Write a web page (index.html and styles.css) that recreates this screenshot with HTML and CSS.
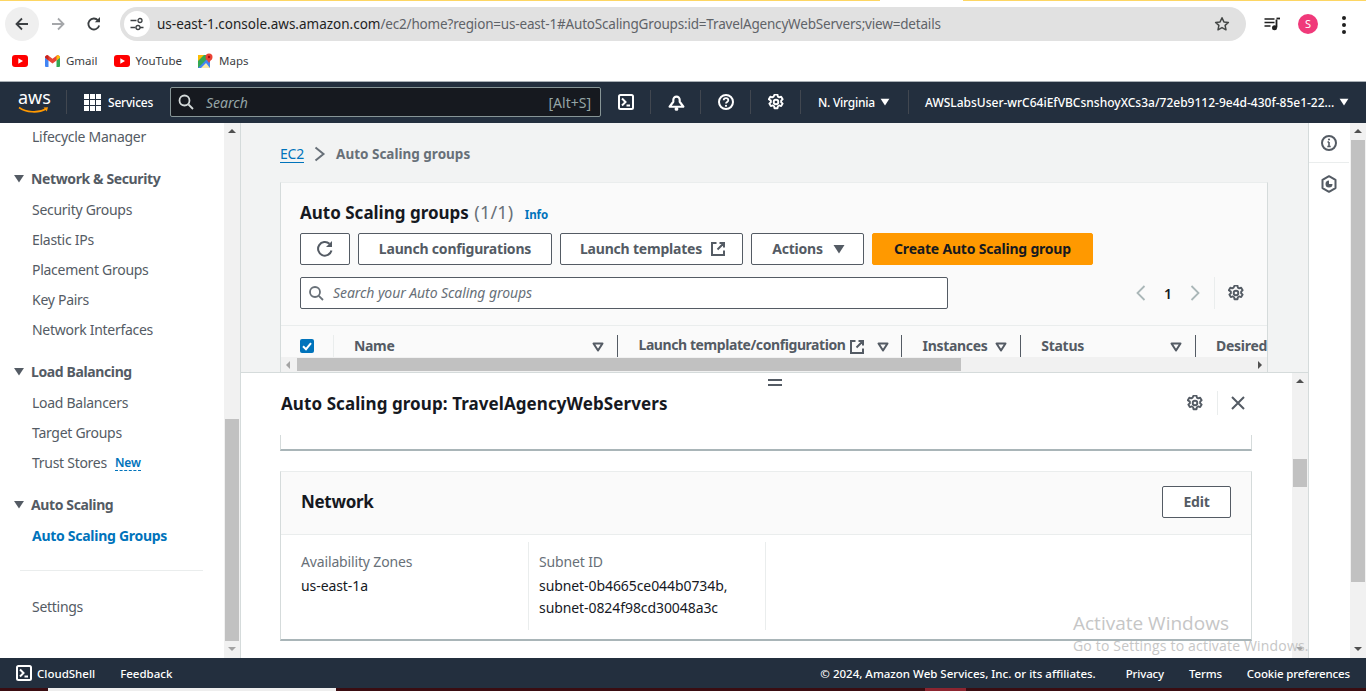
FILE: index.html
```html
<!DOCTYPE html>
<html lang="en">
<head>
    <meta charset="UTF-8" />
    <meta name="viewport" content="width=device-width, initial-scale=1" />
    <title>Auto Scaling groups | EC2</title>
    <link rel="stylesheet" href="styles.css">
</head>
<body>
    <svg class="defs" width="0" height="0">
        <symbol id="gear" viewBox="0.4 0.4 15.2 15.2">
            <path d="M6.600 1h2.800l.4 1.900 1.300.7 1.800-.6 1.400 2.400-1.400 1.300v1.500l1.400 1.300-1.400 2.400-1.800-.6-1.300.7-.4 1.900H6.600l-.4-1.900-1.300-.7-1.800.6-1.400-2.400 1.400-1.300V6.700L1.200 5.400l1.400-2.400 1.800.6 1.300-.7z" fill="none" stroke="currentColor" stroke-width="1.800" stroke-linejoin="round"/>
            <circle cx="8" cy="8" r="2.200" fill="none" stroke="currentColor" stroke-width="1.800"/>
        </symbol>
        <symbol id="sort" viewBox="0 0 12 10">
            <path d="M1.500 1.500h9L6 8.500z" fill="none" stroke="currentColor" stroke-width="2" stroke-linejoin="round"/>
        </symbol>
        <symbol id="caret" viewBox="0 0 12 10">
            <path d="M0.500 1h11L6 9.500z" fill="currentColor"/>
        </symbol>
        <symbol id="ext" viewBox="0 0 16 16">
            <path d="M6.500 2H2v12h12V9.500M9.500 2H14v4.500M14 2L7.500 8.500" fill="none" stroke="currentColor" stroke-width="2"/>
        </symbol>
        <symbol id="shell" viewBox="0 0 16 16">
            <rect x="1" y="1" width="14" height="14" rx="1.500" fill="none" stroke="currentColor" stroke-width="2"/>
            <path d="M4 4.500L7.500 8 4 11.500M8.500 11.500H12" fill="none" stroke="currentColor" stroke-width="2"/>
        </symbol>
        <symbol id="yt" viewBox="0 0 16 12">
            <rect width="16" height="12" rx="3" fill="#f00"/>
            <path d="M6.300 3.300L11 6l-4.700 2.700z" fill="#fff"/>
        </symbol>
    </svg>

    <div class="chrome">
        <div class="toolbar">
            <div class="accent"><span class="accent-left"></span><span class="accent-right"></span></div>
            <div class="back-btn">
                <svg width="16" height="16" viewBox="0 0 16 16"><path d="M14 8H3M8 2.500L2.500 8 8 13.500" fill="none" stroke="#3c4043" stroke-width="1.800"/></svg>
            </div>
            <div class="tool-btn forward">
                <svg width="16" height="16" viewBox="0 0 16 16"><path d="M2 8h11M8 2.500L13.500 8 8 13.500" fill="none" stroke="#a5a7aa" stroke-width="1.800"/></svg>
            </div>
            <div class="tool-btn reload">
                <svg width="16" height="16" viewBox="0 0 16 16"><path d="M13.200 9.500A5.500 5.500 0 1 1 12 4.300" fill="none" stroke="#3c4043" stroke-width="1.800"/><path d="M14 1v5.200H8.800z" fill="#3c4043"/></svg>
            </div>
            <div class="omnibox">
                <div class="site-info">
                    <svg width="14" height="14" viewBox="0 0 14 14"><path d="M0.500 3.500h6M10 10.500h3.500M0.500 10.500h5" stroke="#3c4043" stroke-width="1.300" fill="none"/><circle cx="10" cy="3.500" r="2" fill="none" stroke="#3c4043" stroke-width="1.300"/><circle cx="8" cy="10.500" r="2" fill="none" stroke="#3c4043" stroke-width="1.300"/></svg>
                </div>
                <span class="url"><span class="url-host">us-east-1.console.aws.amazon.com</span>/ec2/home?region=us-east-1#AutoScalingGroups:id=TravelAgencyWebServers;view=details</span>
                <svg class="star" width="16" height="16" viewBox="0 0 16 16"><path d="M8 1.800l1.900 4.100 4.500.5-3.300 3 .9 4.400L8 11.600l-4 2.200.9-4.400-3.300-3 4.500-.5z" fill="none" stroke="#444746" stroke-width="1.500" stroke-linejoin="round"/></svg>
            </div>
            <svg class="media" width="16" height="14" viewBox="0 0 16 14"><path d="M0.500 2h10M0.500 5.500h10M0.500 9h6" stroke="#1f1f1f" stroke-width="1.500" fill="none"/><path d="M12.500 2.500v8" stroke="#1f1f1f" stroke-width="1.800"/><path d="M12.500 1.500H16" stroke="#1f1f1f" stroke-width="1.800"/><circle cx="10.500" cy="10.800" r="2.500" fill="#1f1f1f"/></svg>
            <div class="avatar">S</div>
            <div class="dots"><i></i><i></i><i></i></div>
        </div>
        <div class="bookmarks">
            <svg class="bm-first" width="16" height="12"><use href="#yt"/></svg>
            <a class="bm bm-gmail">
                <svg width="15" height="12" viewBox="0 0 15 12"><path d="M0 2.500V11a1 1 0 0 0 1 1h2.500V5.500z" fill="#4285f4"/><path d="M15 2.500V11a1 1 0 0 1-1 1h-2.500V5.500z" fill="#34a853"/><path d="M0 2.500C0 .8 1.800-.5 3.200.6L7.500 3.800l4.300-3.200C13.200-.5 15 .8 15 2.500l-3.500 3L7.500 8.500l-4-3z" fill="#ea4335"/><path d="M11.500 1.400l.3-.8C13.200-.5 15 .8 15 2.500l-3.500 3z" fill="#fbbc04"/><path d="M3.500 1.400L3.200.6C1.800-.5 0 .8 0 2.500l3.500 3z" fill="#c5221f"/></svg>
                <span>Gmail</span>
            </a>
            <a class="bm bm-yt">
                <svg width="16" height="12"><use href="#yt"/></svg>
                <span>YouTube</span>
            </a>
            <a class="bm bm-maps">
                <svg width="15" height="15" viewBox="0 0 15 15"><rect y="2" width="12" height="13" fill="#34a853"/><path d="M0 15L12 3v12z" fill="#4285f4"/><path d="M0 2h6L0 8z" fill="#fbbc04"/><path d="M3 15l5-5 4 5z" fill="#fbe9a7"/><circle cx="11" cy="4" r="3.500" fill="#ea4335"/><path d="M8.500 6L11 10l2.500-4z" fill="#ea4335"/><circle cx="11" cy="4" r="1.200" fill="#a50e0e"/></svg>
                <span>Maps</span>
            </a>
        </div>
    </div>

    <header class="aws-nav">
        <div class="aws-logo">
            <span class="aws-word">aws</span>
            <svg width="31" height="8" viewBox="0 0 31 8"><path d="M1 1.500C8 6.500 20 7.500 28 3" fill="none" stroke="#f90" stroke-width="1.600"/><path d="M25.500 1.500L30 1.200 28.800 5.500z" fill="#f90"/></svg>
        </div>
        <a class="services">
            <span class="grid-icon"><i></i><i></i><i></i><i></i><i></i><i></i><i></i><i></i><i></i></span>
            Services
        </a>
        <div class="nav-search">
            <svg width="16" height="16" viewBox="0 0 16 16"><circle cx="6.500" cy="6.500" r="5" fill="none" stroke="#d5dbdb" stroke-width="1.800"/><path d="M10.500 10.500L15 15" stroke="#d5dbdb" stroke-width="1.800"/></svg>
            <span class="nav-search-text">Search</span>
            <span class="nav-search-key">[Alt+S]</span>
        </div>
        <a class="nav-icon"><svg width="16" height="16"><use href="#shell"/></svg></a>
        <a class="nav-icon">
            <svg width="17" height="17" viewBox="0 0 16 16"><path d="M1.500 12L5 7.300V5.500a3 3 0 0 1 6 0v1.800l3.500 4.700z" fill="none" stroke="currentColor" stroke-width="2" stroke-linejoin="round"/><circle cx="8" cy="14" r="1.800" fill="currentColor"/></svg>
        </a>
        <a class="nav-icon">
            <svg width="16" height="16" viewBox="0 0 16 16"><circle cx="8" cy="8" r="7" fill="none" stroke="currentColor" stroke-width="2"/><path d="M5.700 6.300c0-3 4.600-3 4.600 0 0 1.700-2.300 1.700-2.300 3.300" fill="none" stroke="currentColor" stroke-width="1.800"/><circle cx="8" cy="11.800" r="1.100" fill="currentColor"/></svg>
        </a>
        <a class="nav-icon"><svg width="16" height="16"><use href="#gear"/></svg></a>
        <a class="nav-region">N. Virginia <svg width="10" height="8"><use href="#caret"/></svg></a>
        <a class="nav-account">AWSLabsUser-wrC64iEfVBCsnshoyXCs3a/72eb9112-9e4d-430f-85e1-22... <svg width="10" height="8"><use href="#caret"/></svg></a>
    </header>

    <div class="main">
        <aside class="sidebar">
            <nav class="side-nav">
                <a class="side-item">Lifecycle Manager</a>
                <div class="side-head"><svg width="12" height="9"><use href="#caret"/></svg>Network &amp; Security</div>
                <a class="side-item">Security Groups</a>
                <a class="side-item">Elastic IPs</a>
                <a class="side-item">Placement Groups</a>
                <a class="side-item">Key Pairs</a>
                <a class="side-item">Network Interfaces</a>
                <div class="side-head"><svg width="12" height="9"><use href="#caret"/></svg>Load Balancing</div>
                <a class="side-item">Load Balancers</a>
                <a class="side-item">Target Groups</a>
                <a class="side-item">Trust Stores <span class="new-tag">New</span></a>
                <div class="side-head"><svg width="12" height="9"><use href="#caret"/></svg>Auto Scaling</div>
                <a class="side-item active">Auto Scaling Groups</a>
                <hr class="side-rule">
                <a class="side-item">Settings</a>
            </nav>
            <div class="vbar side-bar">
                <span class="arrow-up"></span>
                <div class="vtrack"><div class="vthumb"></div></div>
                <span class="arrow-down"></span>
            </div>
        </aside>

        <div class="content">
            <section class="upper">
                <div class="crumbs">
                    <a class="crumb-link">EC2</a>
                    <svg width="12" height="16" viewBox="0 0 12 16"><path d="M1.500 1.500L9.500 8l-8 6.500" fill="none" stroke="#687078" stroke-width="2"/></svg>
                    <span class="crumb-current">Auto Scaling groups</span>
                </div>
                <div class="group-card">
                    <div class="group-head">
                        <h1 class="group-title">Auto Scaling groups <span class="count">(1/1)</span> <a class="info">Info</a></h1>
                        <div class="btn-row">
                            <button class="btn btn-refresh"><svg width="18" height="18" viewBox="0 0 18 18"><path d="M15.500 10.500A6.800 6.800 0 1 1 13.500 3.800" fill="none" stroke="#545b64" stroke-width="2"/><path d="M16 1v6h-6z" fill="#545b64"/></svg></button>
                            <button class="btn btn-config"><span class="btn-text">Launch configurations</span></button>
                            <button class="btn btn-templates"><span class="btn-text">Launch templates</span> <svg width="16" height="16"><use href="#ext"/></svg></button>
                            <button class="btn btn-actions"><span class="btn-text">Actions</span> <svg width="12" height="10"><use href="#caret"/></svg></button>
                            <button class="btn btn-primary"><span class="btn-text">Create Auto Scaling group</span></button>
                        </div>
                        <div class="filter-row">
                            <div class="filter">
                                <svg width="16" height="16" viewBox="0 0 16 16"><circle cx="7" cy="7" r="5" fill="none" stroke="#687078" stroke-width="1.800"/><path d="M10.800 10.800L15 15" stroke="#687078" stroke-width="1.800"/></svg>
                                <span class="filter-text">Search your Auto Scaling groups</span>
                            </div>
                            <div class="pager">
                                <svg class="pager-prev" width="12" height="16" viewBox="0 0 12 16"><path d="M9.500 1L2.500 8l7 7" fill="none" stroke="#aab7b8" stroke-width="1.800"/></svg>
                                <span class="pager-num">1</span>
                                <svg class="pager-next" width="12" height="16" viewBox="0 0 12 16"><path d="M2.500 1l7 7-7 7" fill="none" stroke="#aab7b8" stroke-width="1.800"/></svg>
                                <span class="pager-gear"><svg width="16" height="16"><use href="#gear"/></svg></span>
                            </div>
                        </div>
                    </div>
                    <div class="table-head">
                        <div class="th th-check">
                            <svg width="14" height="14" viewBox="0 0 14 14"><rect width="14" height="14" rx="2" fill="#0073bb"/><path d="M3 7.200l3 3 5-6" fill="none" stroke="#fff" stroke-width="2"/></svg>
                        </div>
                        <div class="th th-name"><span class="th-label">Name</span><svg width="12" height="10"><use href="#sort"/></svg></div>
                        <div class="th th-lt"><span class="th-label">Launch template/configuration</span><svg class="th-ext" width="16" height="16"><use href="#ext"/></svg><svg width="12" height="10"><use href="#sort"/></svg></div>
                        <div class="th th-inst"><span class="th-label">Instances</span><svg width="12" height="10"><use href="#sort"/></svg></div>
                        <div class="th th-status"><span class="th-label">Status</span><svg width="12" height="10"><use href="#sort"/></svg></div>
                        <div class="th th-desired"><span class="th-label">Desired</span></div>
                    </div>
                    <div class="hbar">
                        <span class="arrow-left"></span>
                        <div class="hthumb"></div>
                        <span class="arrow-right"></span>
                    </div>
                </div>
            </section>

            <section class="lower">
                <div class="drag-handle"></div>
                <div class="lower-body">
                    <div class="lower-main">
                        <div class="lower-head">
                            <h2 class="lower-title">Auto Scaling group: TravelAgencyWebServers</h2>
                            <svg class="lower-gear" width="16" height="16"><use href="#gear"/></svg>
                            <span class="lower-sep"></span>
                            <svg class="lower-close" width="16" height="16" viewBox="0 0 16 16"><path d="M2 2l12 12M14 2L2 14" stroke="#545b64" stroke-width="2"/></svg>
                        </div>
                        <div class="cut-card"></div>
                        <div class="net-card">
                            <div class="net-head">
                                <h3 class="net-title">Network</h3>
                                <button class="btn btn-edit"><span class="btn-text">Edit</span></button>
                            </div>
                            <div class="net-cols">
                                <div class="net-col">
                                    <div class="net-label">Availability Zones</div>
                                    <div class="net-value">us-east-1a</div>
                                </div>
                                <div class="net-col">
                                    <div class="net-label">Subnet ID</div>
                                    <div class="net-value">subnet-0b4665ce044b0734b,<br>subnet-0824f98cd30048a3c</div>
                                </div>
                            </div>
                        </div>
                    </div>
                    <div class="vbar lower-bar">
                        <span class="arrow-up"></span>
                        <div class="vtrack"><div class="vthumb"></div></div>
                        <span class="arrow-down"></span>
                    </div>
                </div>
            </section>
        </div>

        <aside class="rail">
            <div class="rail-item">
                <svg width="16" height="16" viewBox="0 0 16 16"><circle cx="8" cy="8" r="7" fill="none" stroke="#545b64" stroke-width="2"/><path d="M8 7v4.500M6.300 11.500h3.400M6.500 7H8" stroke="#545b64" stroke-width="1.600" fill="none"/><circle cx="8" cy="4.500" r="1.100" fill="#545b64"/></svg>
            </div>
            <div class="rail-item">
                <svg width="16" height="18" viewBox="0 0 16 18"><path d="M8 1.200l6.500 3.700v8.200L8 16.800l-6.500-3.700V4.900z" fill="none" stroke="#545b64" stroke-width="2" stroke-linejoin="round"/><path d="M8 5.500a3.500 3.500 0 1 0 3.500 3.500L8 9z" fill="#545b64"/></svg>
            </div>
        </aside>
        <div class="vbar page-bar">
            <span class="arrow-up"></span>
            <div class="vtrack"><div class="vthumb"></div></div>
            <span class="arrow-down"></span>
        </div>

        <div class="watermark">
            <div class="wm-title">Activate Windows</div>
            <div class="wm-sub">Go to Settings to activate Windows.</div>
        </div>
    </div>

    <footer class="aws-foot">
        <a class="foot-shell"><svg width="16" height="16"><use href="#shell"/></svg>CloudShell</a>
        <a class="foot-feedback">Feedback</a>
        <span class="foot-copy">© 2024, Amazon Web Services, Inc. or its affiliates.</span>
        <a class="foot-link">Privacy</a>
        <a class="foot-link">Terms</a>
        <a class="foot-link">Cookie preferences</a>
    </footer>
    <div class="wallpaper"><span class="wall-white"></span><span class="wall-glow"></span></div>
</body>
</html>
```

FILE: styles.css
```css
* {
    box-sizing: border-box;
}
html, body {
    margin: 0;
    height: 691px;
    overflow: hidden;
}
body {
    width: 1366px;
    display: flex;
    flex-direction: column;
    font-family: "Noto Sans", "Open Sans", sans-serif;
    font-size: 14px;
    color: #16191f;
    background: #fff;
}
.defs {
    position: absolute;
}
svg {
    display: block;
    flex: none;
}

/* browser chrome */
.chrome {
    height: 82px;
    flex: none;
    background: #fff;
    border-bottom: 1px solid #a9b0b6;
}
.toolbar {
    height: 41px;
    display: flex;
    align-items: flex-start;
    padding-top: 7px;
    position: relative;
}
.accent {
    position: absolute;
    top: 0;
    left: 0;
    right: 0;
    height: 1px;
    display: flex;
    justify-content: space-between;
}
.accent-left {
    width: 880px;
    background: #fdd663;
}
.accent-right {
    width: 403px;
    background: #fdd663;
}
.back-btn {
    width: 34px;
    height: 34px;
    margin-left: 5px;
    border-radius: 50%;
    background: #efefef;
    display: flex;
    align-items: center;
    justify-content: center;
}
.tool-btn {
    width: 36px;
    height: 34px;
    display: flex;
    align-items: center;
    justify-content: center;
}
.forward {
    margin-left: 1px;
}
.omnibox {
    width: 1126px;
    height: 34px;
    margin-left: 8px;
    padding: 0 16px 0 4px;
    border-radius: 17px;
    background: #e1e1e1;
    display: flex;
    align-items: center;
}
.site-info {
    width: 26px;
    height: 26px;
    border-radius: 50%;
    background: #fff;
    display: flex;
    align-items: center;
    justify-content: center;
    flex: none;
}
.url {
    margin-left: 7px;
    flex: 1;
    font-size: 13.5px;
    letter-spacing: -0.18px;
    color: #5f6368;
    white-space: nowrap;
}
.url-host {
    color: #1f1f1f;
    letter-spacing: 0;
}
.media {
    margin: 10px 0 0 18px;
}
.avatar {
    width: 20px;
    height: 20px;
    margin: 7px 0 0 18px;
    border-radius: 50%;
    background: #f0397a;
    color: #fff;
    font-size: 11px;
    line-height: 20px;
    text-align: center;
}
.dots {
    margin: 9px 0 0 24px;
    display: flex;
    flex-direction: column;
    gap: 3px;
}
.dots i {
    width: 4px;
    height: 4px;
    border-radius: 50%;
    background: #1f1f1f;
}
.bookmarks {
    height: 40px;
    padding-bottom: 1px;
    display: flex;
    align-items: center;
    padding-left: 12px;
    font-size: 11.5px;
    color: #3c4043;
}
.bm {
    display: flex;
    align-items: center;
    gap: 6px;
}
.bm-gmail {
    margin-left: 17px;
}
.bm-yt {
    margin-left: 16px;
}
.bm-maps {
    margin-left: 16px;
}

/* console top bar */
.aws-nav {
    height: 41px;
    flex: none;
    padding-bottom: 1px;
    background: #232f3e;
    color: #fff;
    display: flex;
    align-items: center;
    font-size: 12px;
    font-weight: 500;
}
.aws-logo {
    width: 48px;
    margin-left: 18px;
    height: 26px;
}
.aws-word {
    display: block;
    font-size: 18px;
    line-height: 17px;
    font-weight: 400;
}
.services {
    height: 24px;
    padding-left: 17px;
    border-left: 1px solid #414750;
    display: flex;
    align-items: center;
    gap: 7px;
    width: 105px;
    letter-spacing: -0.2px;
}
.grid-icon {
    display: grid;
    grid-template-columns: repeat(3, 5px);
    gap: 1px;
}
.grid-icon i {
    height: 5px;
    background: #fff;
}
.nav-search {
    width: 431px;
    height: 30px;
    border: 1px solid #879596;
    border-radius: 2px;
    background: #16191f;
    display: flex;
    align-items: center;
    padding: 0 9px 0 6px;
    margin-left: -1px;
    font-size: 14px;
    font-weight: 400;
    color: #95a5a6;
}
.nav-search svg {
    margin-left: 1px;
}
.nav-search-text {
    margin-left: 12px;
    flex: 1;
    font-style: italic;
}
.nav-search-key {
    color: #95a5a6;
}
.nav-icon {
    width: 50px;
    height: 24px;
    padding-left: 1px;
    border-right: 1px solid #414750;
    display: flex;
    align-items: center;
    justify-content: center;
    color: #fff;
}
.nav-region {
    width: 108px;
    height: 24px;
    padding-left: 17px;
    border-right: 1px solid #414750;
    display: flex;
    align-items: center;
    gap: 5px;
    letter-spacing: -0.25px;
}
.nav-account {
    flex: 1;
    padding-left: 16px;
    display: flex;
    align-items: center;
    gap: 5px;
    white-space: nowrap;
}

/* main area */
.main {
    flex: 1;
    display: flex;
    position: relative;
    min-height: 0;
}
.sidebar {
    width: 241px;
    flex: none;
    display: flex;
    background: #fff;
}
.side-nav {
    flex: 1;
    margin-top: -2px;
    color: #545b64;
    overflow: hidden;
    letter-spacing: -0.28px;
}
.side-item {
    display: flex;
    align-items: center;
    gap: 8px;
    height: 30px;
    padding-left: 32px;
    white-space: nowrap;
}
.side-item.active {
    color: #0073bb;
    font-weight: 700;
}
.side-head {
    display: flex;
    align-items: center;
    height: 30px;
    margin: 12px 0 1px;
    padding-left: 13px;
    font-weight: 700;
    gap: 6px;
    letter-spacing: -0.38px;
}
.new-tag {
    margin-top: 2px;
    font-size: 12px;
    font-weight: 600;
    letter-spacing: -0.1px;
    color: #0073bb;
    line-height: 14px;
    border-bottom: 1px dashed #0073bb;
}
.side-rule {
    margin: 20px 21px 20px 20px;
    border: 0;
    border-top: 1px solid #eaeded;
}

/* scrollbars */
.vbar {
    width: 16px;
    flex: none;
    background: #f1f1f1;
    display: flex;
    flex-direction: column;
    align-items: center;
}
.arrow-up, .arrow-down {
    flex: none;
    width: 0;
    height: 0;
    margin: 6px 0 7px;
    border-left: 4px solid transparent;
    border-right: 4px solid transparent;
}
.arrow-up {
    border-bottom: 4px solid #505050;
}
.arrow-down {
    border-top: 4px solid #a3a3a3;
}
.vtrack {
    flex: 1;
    width: 100%;
    padding: 0 1px;
}
.vthumb {
    width: 100%;
    background: #c1c1c1;
}
.side-bar {
    width: 17px;
    border-right: 1px solid #d5dbdb;
}
.side-bar .vthumb {
    height: 222px;
    margin-top: 279px;
}
.page-bar .vthumb {
    height: 442px;
}
.page-bar .arrow-down {
    border-top-color: #505050;
}
.lower-bar .vthumb {
    height: 28px;
    margin-top: 69px;
}

/* split content */
.content {
    width: 1067px;
    flex: none;
    display: flex;
    flex-direction: column;
}
.upper {
    height: 249px;
    flex: none;
    background: #f2f3f3;
    padding: 0 40px 0 39px;
    overflow: hidden;
}
.crumbs {
    height: 59px;
    padding-top: 3px;
    display: flex;
    align-items: center;
    gap: 10px;
}
.crumb-link {
    color: #0073bb;
    border-bottom: 1px solid #0073bb;
    line-height: 17px;
    letter-spacing: -0.2px;
}
.crumb-current {
    color: #687078;
    font-weight: 700;
    font-size: 13.5px;
}
.group-card {
    width: 988px;
    height: 190px;
    background: #fafafa;
    border-top: 1px solid #eaeded;
    border-left: 1px solid #d5dbdb;
    border-right: 1px solid #d5dbdb;
    display: flex;
    flex-direction: column;
}
.group-head {
    height: 143px;
    padding: 16px 19px 0;
    border-bottom: 1px solid #eaeded;
}
.group-title {
    margin: 0;
    height: 34px;
    font-size: 17px;
    line-height: 27px;
    font-weight: 700;
    white-space: nowrap;
}
.count {
    margin-left: 1px;
    font-size: 18px;
    font-weight: 400;
    letter-spacing: 0.2px;
    color: #687078;
}
.info {
    font-size: 11.5px;
    letter-spacing: -0.1px;
    color: #0073bb;
    margin-left: 7px;
}
.btn-row {
    display: flex;
    gap: 8px;
}
.btn {
    height: 32px;
    padding: 0;
    background: #fff;
    border: 1px solid #545b64;
    border-radius: 2px;
    color: #545b64;
    font-family: inherit;
    font-size: 14px;
    font-weight: 700;
    display: flex;
    align-items: center;
    justify-content: center;
}
.btn-text {
    padding-bottom: 2px;
    letter-spacing: -0.2px;
}
.btn-refresh {
    width: 50px;
}
.btn-config {
    width: 194px;
}
.btn-templates {
    width: 183px;
    padding-left: 3px;
    gap: 8px;
}
.btn-actions {
    width: 113px;
    padding-left: 2px;
    gap: 10px;
}
.btn-primary {
    width: 221px;
    background: #ff9900;
    border-color: #ff9900;
    color: #16191f;
}
.filter-row {
    display: flex;
    margin-top: 12px;
    align-items: center;
}
.filter {
    width: 648px;
    height: 32px;
    background: #fff;
    border: 1px solid #545b64;
    border-radius: 2px;
    display: flex;
    align-items: center;
    gap: 9px;
    padding-left: 7px;
    color: #687078;
    font-style: italic;
}
.filter-text {
    padding-bottom: 2px;
    letter-spacing: -0.07px;
}
.pager {
    display: flex;
    align-items: center;
    margin-left: 187px;
    height: 32px;
}
.pager-num {
    width: 42px;
    text-align: center;
    font-weight: 600;
}
.pager-gear {
    margin-left: 13px;
    padding-left: 13px;
    height: 32px;
    border-left: 1px solid #eaeded;
    display: flex;
    align-items: center;
    color: #545b64;
}
.table-head {
    height: 31px;
    display: flex;
    color: #545b64;
    font-weight: 700;
    overflow: hidden;
}
.th {
    display: flex;
    align-items: center;
    height: 23px;
    margin-top: 9px;
    padding-left: 20px;
    border-right: 1px solid #545b64;
    white-space: nowrap;
    color: #545b64;
}
.th-label {
    flex: 1;
    padding-bottom: 2px;
    letter-spacing: -0.3px;
}
.th-check {
    width: 53px;
    padding-left: 19px;
    padding-bottom: 2px;
    border-right-color: #eaeded;
}
.th-name {
    width: 285px;
    padding-right: 13px;
}
.th-lt {
    width: 284px;
    padding-right: 13px;
}
.th-lt .th-label {
    flex: none;
    margin-right: 3px;
    padding-bottom: 4px;
    letter-spacing: -0.42px;
}
.th-ext {
    margin-right: 12px;
}
.th-inst {
    width: 119px;
    padding-right: 13px;
}
.th-status {
    width: 175px;
    padding-right: 13px;
}
.th-desired {
    flex: 1;
    border-right: 0;
}
.hbar {
    height: 15px;
    flex: none;
    background: #f1f1f1;
    display: flex;
    align-items: center;
    justify-content: space-between;
    position: relative;
}
.hthumb {
    width: 664px;
    height: 13px;
    background: #c1c1c1;
    position: absolute;
    left: 16px;
    top: 1px;
}
.arrow-left, .arrow-right {
    width: 0;
    height: 0;
    margin: 0 5px;
    border-top: 4px solid transparent;
    border-bottom: 4px solid transparent;
}
.arrow-left {
    border-right: 4px solid #a3a3a3;
}
.arrow-right {
    border-left: 4px solid #505050;
}

/* lower split panel */
.lower {
    flex: 1;
    min-height: 0;
    border-top: 1px solid #d5dbdb;
    background: #fff;
    position: relative;
}
.drag-handle {
    position: absolute;
    left: 527px;
    top: 6px;
    width: 14px;
    height: 7px;
    border-top: 2px solid #545b64;
    border-bottom: 2px solid #545b64;
}
.lower-body {
    display: flex;
    height: 100%;
}
.lower-main {
    flex: 1;
    padding: 0 40px 0 39px;
    overflow: hidden;
}
.lower-head {
    height: 62px;
    padding: 0 0 2px 1px;
    display: flex;
    align-items: center;
}
.lower-title {
    margin: 0;
    flex: 1;
    font-size: 17px;
    letter-spacing: 0.08px;
    font-weight: 700;
}
.lower-gear {
    color: #545b64;
}
.lower-sep {
    width: 1px;
    height: 24px;
    margin: 0 12px 0 14px;
    background: #eaeded;
}
.lower-close {
    margin-right: 6px;
}
.cut-card {
    height: 16px;
    border: 1px solid #d5dbdb;
    border-top: 0;
    border-bottom: 2px solid #a9b5b8;
}
.net-card {
    margin-top: 20px;
    height: 170px;
    border: 1px solid #eaeded;
    border-bottom: 2px solid #a9b5b8;
    border-left-color: #d5dbdb;
    border-right-color: #d5dbdb;
}
.net-head {
    height: 63px;
    background: #fafafa;
    border-bottom: 1px solid #eaeded;
    display: flex;
    align-items: center;
    justify-content: space-between;
    padding: 0 20px 2px;
}
.net-title {
    margin: 0 0 2px;
    font-size: 17px;
    letter-spacing: -0.3px;
    font-weight: 700;
}
.btn-edit {
    width: 69px;
}
.net-cols {
    display: flex;
    margin-top: 7px;
}
.net-col {
    width: 237px;
    height: 88px;
    padding: 9px 0 0 10px;
    border-right: 1px solid #eaeded;
    line-height: 22px;
}
.net-col:first-child {
    width: 248px;
    padding-left: 20px;
}
.net-label {
    color: #687078;
    margin-bottom: 2px;
    letter-spacing: -0.15px;
}
.net-value {
    letter-spacing: -0.08px;
}

/* right rail */
.rail {
    width: 42px;
    flex: none;
    padding-right: 1px;
    border-left: 1px solid #d5dbdb;
    background: #fff;
}
.rail-item {
    height: 40px;
    display: flex;
    align-items: center;
    justify-content: center;
    border-bottom: 1px solid #eaeded;
}
.rail-item:last-child {
    height: 42px;
    border-bottom: 0;
}

.watermark {
    position: absolute;
    left: 1073px;
    top: 487px;
    color: #c6c6c6;
    white-space: nowrap;
    font-family: "Open Sans", sans-serif;
    pointer-events: none;
}
.wm-title {
    font-size: 19px;
    line-height: 26px;
}
.wm-sub {
    font-size: 14px;
    letter-spacing: 0.18px;
    line-height: 20px;
}

/* console footer */
.aws-foot {
    height: 30px;
    flex: none;
    background: #232f3e;
    color: #fff;
    display: flex;
    align-items: center;
    padding-left: 16px;
    font-size: 11.5px;
    font-weight: 500;
}
.foot-shell {
    display: flex;
    align-items: center;
    gap: 5px;
}
.foot-feedback {
    margin-left: 25px;
}
.foot-copy {
    margin-left: auto;
    margin-right: 5px;
}
.foot-link {
    margin-left: 25px;
    letter-spacing: -0.15px;
}
.foot-link:last-child {
    margin-right: 16px;
}
.wallpaper {
    height: 3px;
    flex: none;
    background: #3a0d12;
    position: relative;
}
.wall-white {
    position: absolute;
    left: 48px;
    top: 0;
    width: 288px;
    height: 3px;
    background: #eee;
}
.wall-glow {
    position: absolute;
    left: 925px;
    top: 0;
    width: 41px;
    height: 3px;
    background: #8c2530;
}
```
